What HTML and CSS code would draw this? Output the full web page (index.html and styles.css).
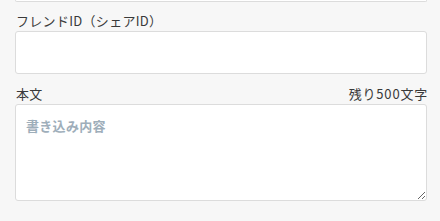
FILE: index.html
```html
<!DOCTYPE html>
<html lang="ja">
<head>
    <meta charset="UTF-8">
    <meta name="viewport" content="width=device-width, initial-scale=1.0">
    <title>書き込み</title>
    <link rel="stylesheet" href="styles.css">
</head>
<body>
    <form class="post-form">
        <!-- previous field (scrolled out) -->
        <div class="prev-input"></div>

        <div class="field">
            <label class="field-label" for="friend-id">フレンドID（シェアID）</label>
            <input type="text" id="friend-id" class="text-input">
        </div>

        <div class="field">
            <div class="label-row">
                <label class="field-label" for="body">本文</label>
                <span class="counter">残り500文字</span>
            </div>
            <textarea id="body" class="text-area" placeholder="書き込み内容"></textarea>
        </div>

        <div class="option-row">
            <span class="check"></span>
            <span class="tag"></span>
            <span class="option-text">匿名で書き込む</span>
        </div>
    </form>
</body>
</html>
```

FILE: styles.css
```css
/* General */
body {
    margin: 0;
    padding: 0;
    background-color: #f7f7f7;
    font-family: "Noto Sans CJK JP", "Noto Sans", sans-serif;
    color: #3a3a3a;
    overflow: hidden;
}

.post-form {
    padding: 0 13px 0 15px;
}

.prev-input {
    height: 1px;
    background-color: #fff;
    border: 1px solid #dcdcdc;
    border-top: none;
    border-radius: 0 0 3px 3px;
}

/* Fields */
.field {
    margin-top: 9px;
}

.field + .field {
    margin-top: 10px;
}

.field-label {
    display: block;
    font-size: 13px;
    line-height: 20px;
    padding-left: 1px;
    letter-spacing: 0.3px;
}

.label-row {
    display: flex;
    justify-content: space-between;
    align-items: center;
}

.counter {
    font-size: 13px;
    line-height: 20px;
    letter-spacing: 0.8px;
    margin-right: -1px;
}

.text-input,
.text-area {
    display: block;
    width: 100%;
    box-sizing: border-box;
    margin: 0;
    background-color: #fff;
    border: 1px solid #dcdcdc;
    border-radius: 3px;
    font-family: inherit;
    font-size: 13px;
    outline: none;
}

.text-input {
    height: 43px;
    padding: 0 10px;
}

.text-area {
    height: 97px;
    padding: 11px 10px;
    line-height: 20px;
    resize: vertical;
}

.text-area::placeholder {
    color: #9eaeba;
    font-weight: bold;
    letter-spacing: 0.3px;
}

/* Option row (cut off at bottom) */
.option-row {
    display: flex;
    align-items: center;
    gap: 8px;
    margin-top: 17px;
    padding-left: 4px;
    font-size: 12px;
    color: #888;
}

.check {
    width: 8px;
    height: 8px;
    background-color: #5b7c99;
    border-radius: 2px;
}

.tag {
    width: 12px;
    height: 8px;
    background-color: #ccc;
}
```
